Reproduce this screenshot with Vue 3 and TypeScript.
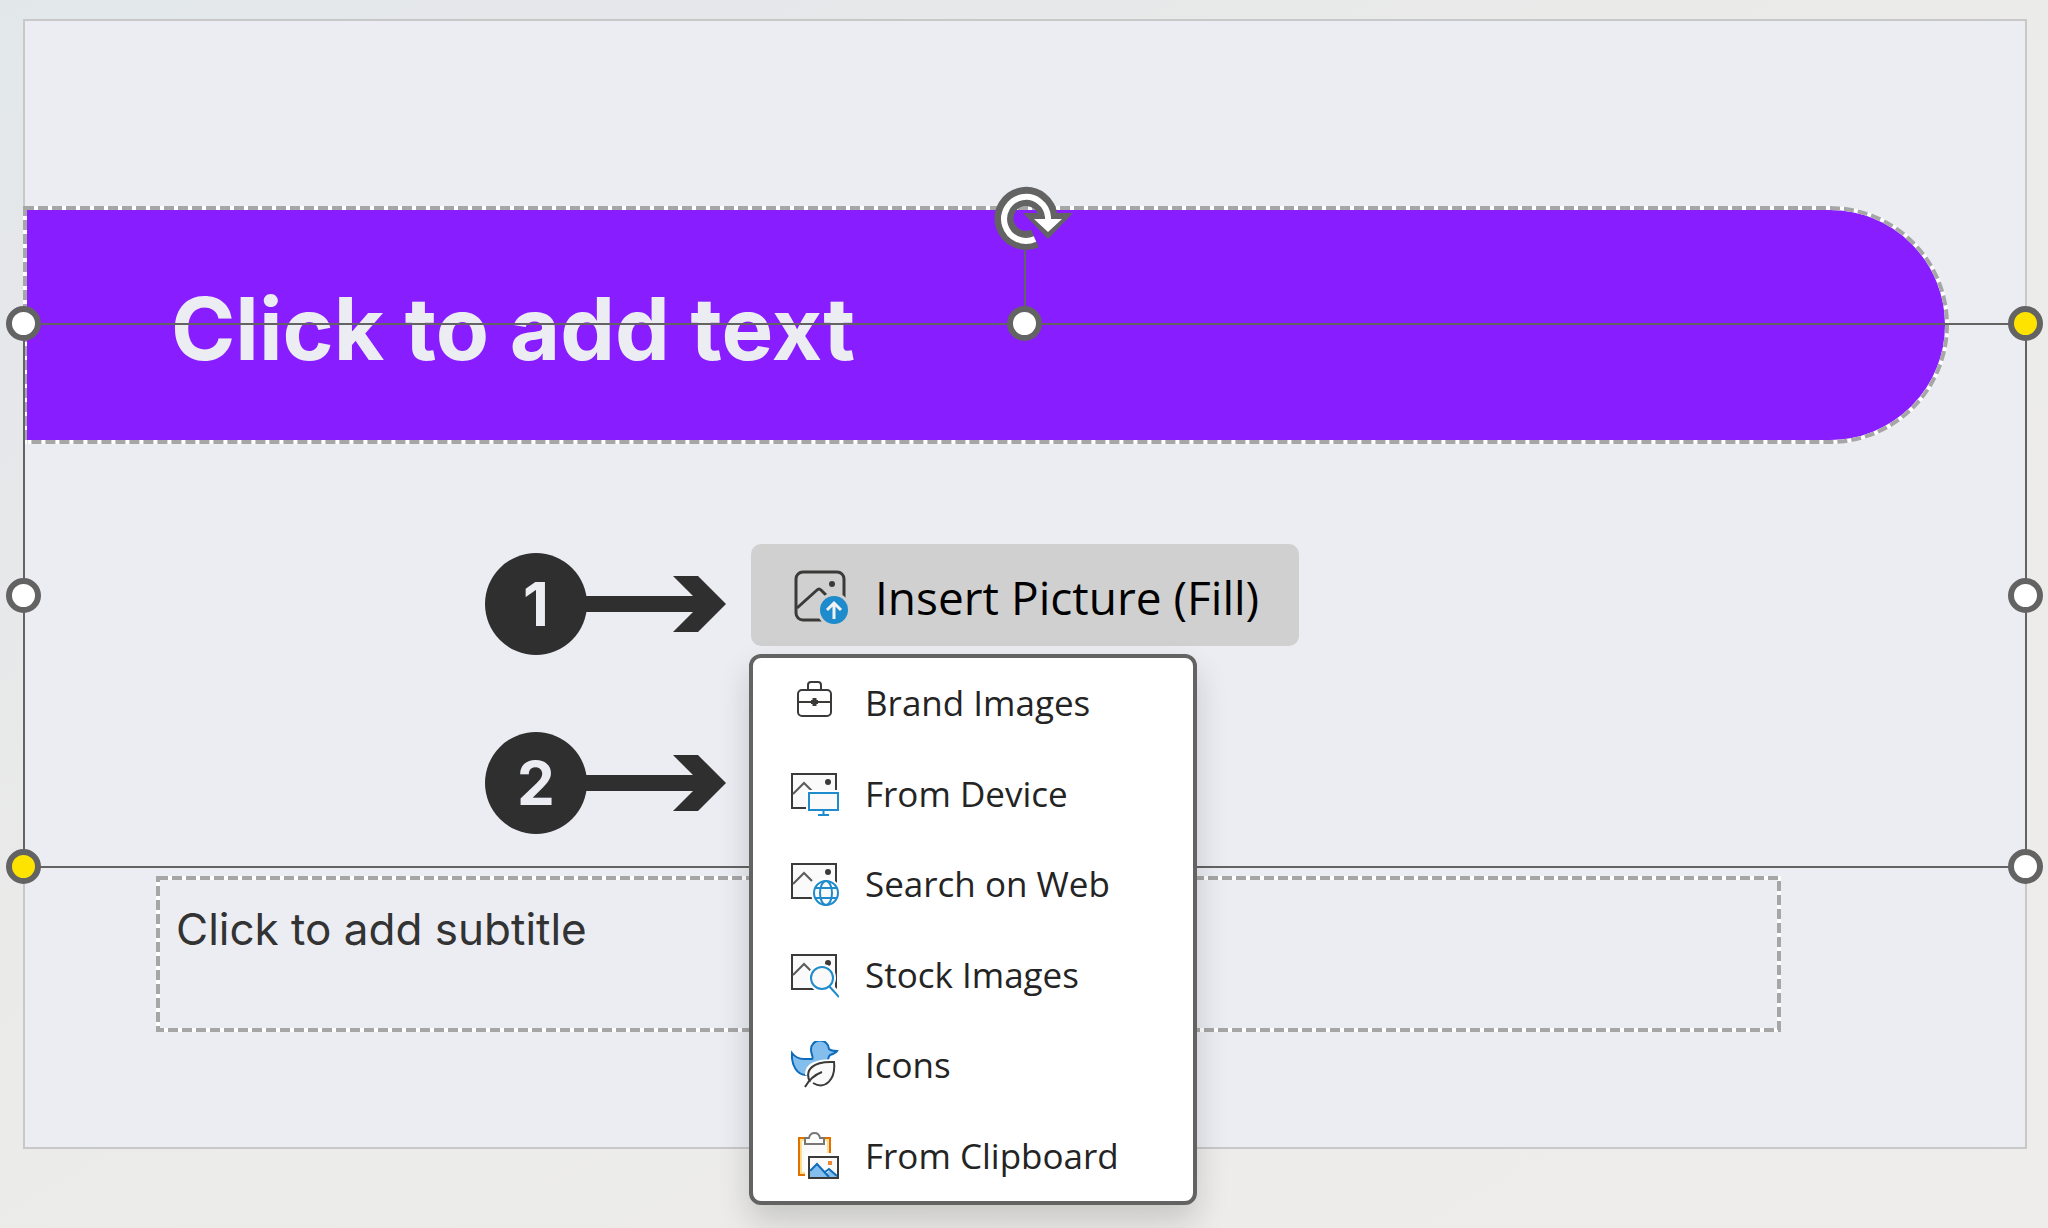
<script setup lang="ts">
import { ref } from 'vue'

interface Handle {
  id: string
  label: string
  adjust?: boolean
}

interface MenuEntry {
  id: string
  label: string
}

const title = ref('Click to add text')
const subtitle = ref('Click to add subtitle')

const steps: number[] = [1, 2]

const handles: Handle[] = [
  { id: 'nw', label: 'Resize top left' },
  { id: 'n', label: 'Resize top' },
  { id: 'ne', label: 'Adjust top right corner', adjust: true },
  { id: 'w', label: 'Resize left' },
  { id: 'e', label: 'Resize right' },
  { id: 'sw', label: 'Adjust bottom left corner', adjust: true },
  { id: 'se', label: 'Resize bottom right' },
]

const entries: MenuEntry[] = [
  { id: 'brand', label: 'Brand Images' },
  { id: 'device', label: 'From Device' },
  { id: 'web', label: 'Search on Web' },
  { id: 'stock', label: 'Stock Images' },
  { id: 'icons', label: 'Icons' },
  { id: 'clipboard', label: 'From Clipboard' },
]
</script>

<template>
  <main class="workspace">
    <section class="slide" aria-label="Slide">
      <div class="band">
        <svg class="outline" aria-hidden="true">
          <rect class="band-shape fill" x="-200" y="2" height="234" rx="117" />
          <rect class="band-shape base" x="-200" y="2" height="234" rx="117" />
          <rect class="band-shape dash" x="-200" y="2" height="234" rx="117" />
          <path class="base" d="M2 0V238" />
          <path class="dash" d="M2 0V238" />
        </svg>
        <input v-model="title" class="title" type="text" aria-label="Slide title" />
      </div>

      <div class="subtitle-box">
        <svg class="outline" aria-hidden="true">
          <rect class="box-shape base" x="2" y="2" />
          <rect class="box-shape dash" x="2" y="2" />
        </svg>
        <input v-model="subtitle" class="subtitle" type="text" aria-label="Slide subtitle" />
      </div>

      <div class="selection">
        <span class="stem"></span>
        <button class="rotate" type="button" aria-label="Rotate">
          <svg viewBox="0 0 84 66" aria-hidden="true">
            <path d="M43 53.5A22 22 0 1 1 56 32" fill="none" stroke="#636363" stroke-width="19" />
            <path d="M31 28H81L56 54Z" fill="#636363" />
            <path d="M43 54A22 22 0 1 1 56 32V38" fill="none" stroke="#fff" stroke-width="6" />
            <path d="M42 34H70L56 47Z" fill="#fff" />
          </svg>
        </button>
        <button
          v-for="h in handles"
          :key="h.id"
          type="button"
          class="handle"
          :class="[h.id, { adjust: h.adjust }]"
          :aria-label="h.label"
        ></button>
      </div>

      <div class="tools">
        <ol class="steps">
          <li v-for="n in steps" :key="n" class="step">
            <span class="number">{{ n }}</span>
            <svg class="arrow" viewBox="0 0 142 56" aria-hidden="true">
              <path d="M0 20H109L89 0H114L142 28L114 56H89L109 36H0Z" fill="#2f2f2f" />
            </svg>
          </li>
        </ol>

        <div class="picker">
          <button class="insert" type="button" aria-haspopup="menu" aria-expanded="true">
            <svg class="insert-icon" viewBox="0 0 56 56" aria-hidden="true">
              <rect x="3" y="3" width="48" height="48" rx="7" fill="none" stroke="#3b3a39" stroke-width="3" />
              <path d="M4 39L24 21Q26 19 28 21L33 26" fill="none" stroke="#3b3a39" stroke-width="3" />
              <circle cx="39" cy="15" r="3" fill="#3b3a39" />
              <circle cx="41" cy="41" r="17" fill="#d0d0d0" />
              <circle cx="41" cy="41" r="14" fill="#1e8bcd" />
              <path d="M41 50V34M34 41L41 34L48 41" fill="none" stroke="#f3f3f3" stroke-width="3" />
            </svg>
            Insert Picture (Fill)
          </button>

          <div class="menu" role="menu" aria-label="Insert Picture">
            <button v-for="e in entries" :key="e.id" class="entry" type="button" role="menuitem">
              <svg class="entry-icon" viewBox="0 0 48 48" fill="none" aria-hidden="true">
                <g v-if="e.id === 'brand'" stroke="#3b3a39" stroke-width="2">
                  <rect x="7" y="11" width="33" height="26" rx="4" />
                  <path d="M17 11V6Q17 3 20 3H27Q30 3 30 6V11M7 23H40" />
                  <path d="M23.500 19V27" stroke-width="4" />
                  <path d="M20 23H27" stroke-width="4" />
                </g>

                <g v-if="e.id === 'device' || e.id === 'web' || e.id === 'stock'">
                  <rect x="1" y="4" width="44" height="34" fill="#fafafa" stroke="#3b3a39" stroke-width="2" />
                  <path d="M2 24L13 13L21 21" stroke="#5a5a5a" stroke-width="2" />
                  <circle cx="37" cy="12" r="3" fill="#3b3a39" />
                </g>
                <g v-if="e.id === 'device'">
                  <path d="M15 20H48V42H15Z" fill="#fff" />
                  <path d="M18 23H47V40H18ZM32.500 40V45M27 45H38" fill="#fafafa" stroke="#1e8bcd" stroke-width="2" />
                </g>
                <g v-if="e.id === 'web'">
                  <circle cx="35" cy="33" r="15" fill="#fff" />
                  <g stroke="#1e8bcd" stroke-width="2">
                    <circle cx="35" cy="33" r="12" fill="#fafafa" />
                    <ellipse cx="35" cy="33" rx="6" ry="12" />
                    <path d="M24 28H46M24 38H46" />
                  </g>
                </g>
                <g v-if="e.id === 'stock'">
                  <circle cx="31" cy="27" r="14" fill="#fff" />
                  <path d="M37 34L48 45" stroke="#fff" stroke-width="7" />
                  <circle cx="31" cy="27" r="11" fill="#fafafa" stroke="#1e8bcd" stroke-width="2" />
                  <path d="M38 35L48 46" stroke="#1e8bcd" stroke-width="2" />
                </g>

                <g v-if="e.id === 'icons'" stroke-width="2">
                  <path
                    d="M1 12C4 16 8 18 13 18H21C23 17 20 13 20 9A9 9 0 0 1 38 8C40 10 42 10 46 10C45 12 42 13 39 14C37 16 37 19 36 22C34 30 25 34 15 34C6 34 0 24 1 12Z"
                    fill="#83beec"
                    stroke="#0f6cbd"
                  />
                  <path d="M14 34C14 22 24 18 45 18V36H20Z" fill="#fff" />
                  <path
                    d="M19 41C13 29 22 20 43 21C45 39 34 49 22 42M14 46C18 39 23 34 31 31"
                    fill="#fafafa"
                    stroke="#3b3a39"
                  />
                </g>

                <g v-if="e.id === 'clipboard'">
                  <rect x="8" y="6" width="31" height="37" fill="#fafafa" stroke="#e07000" stroke-width="2" />
                  <rect x="10" y="8" width="27" height="33" stroke="#ffdd8f" stroke-width="2" />
                  <path d="M14 12V6H18Q19 1 23.500 1Q28 1 29 6H33V12Z" fill="#fff" stroke="#797774" stroke-width="2" />
                  <path d="M14 21H48V47H14Z" fill="#fff" />
                  <rect x="18" y="25" width="29" height="21" fill="#fafafa" stroke="#3b3a39" stroke-width="2" />
                  <path d="M19 40L26 33L35 42L39 38L46 44V45H19Z" fill="#83beec" />
                  <path d="M19 39L26 32L38 45M34 40L38 37L46 44" stroke="#0f6cbd" stroke-width="2" />
                  <path d="M37 29H41V33H37Z" fill="#ed8733" />
                </g>
              </svg>
              {{ e.label }}
            </button>
          </div>
        </div>
      </div>
    </section>
  </main>
</template>

<style>
body {
  margin: 0;
}
</style>

<style scoped>
.workspace {
  box-sizing: border-box;
  display: flex;
  min-height: 100vh;
  padding: 19px 21px 79px 23px;
  overflow: hidden;
  background: linear-gradient(150deg, #e2e8ea, #e6e7ea 16%, #ebebe9 45%, #eeedeb);
}

.slide {
  position: relative;
  box-sizing: border-box;
  flex: 1;
  border: 2px solid #c8c8c8;
  background: #ecedf3;
}

button,
input {
  margin: 0;
  padding: 0;
  border: 0;
  background: none;
  font: inherit;
  color: inherit;
}

.outline {
  position: absolute;
  inset: 0;
  width: 100%;
  height: 100%;
  fill: none;
}

.fill {
  fill: #881eff;
}

.base {
  stroke: #fff;
  stroke-width: 4px;
}

.dash {
  stroke: #a6a6a6;
  stroke-width: 4px;
  stroke-dasharray: 10 4;
}

.band-shape {
  width: calc(100% + 198px);
}

.box-shape {
  width: calc(100% - 4px);
  height: calc(100% - 4px);
}

.band {
  position: absolute;
  top: 185px;
  left: -2px;
  right: 76px;
  box-sizing: border-box;
  display: flex;
  align-items: center;
  height: 238px;
  padding-top: 8px;
}

.title {
  position: relative;
  width: 70%;
  margin-left: 148px;
  font: 700 87px/100px Inter, sans-serif;
  color: #ecedf3;
}

.subtitle-box {
  position: absolute;
  top: 855px;
  left: 131px;
  right: 244px;
  box-sizing: border-box;
  height: 156px;
  padding: 27px 20px;
}

.subtitle {
  position: relative;
  width: 100%;
  font: 400 44px/52px Inter, sans-serif;
  color: #333;
}

.selection {
  position: absolute;
  top: 303px;
  left: -1px;
  right: -1px;
  height: 543px;
}

.selection::before {
  content: "";
  position: absolute;
  inset: -1px;
  border: 2px solid #636363;
}

.stem {
  position: absolute;
  left: calc(50% - 1px);
  bottom: 100%;
  width: 2px;
  height: 74px;
  background: #636363;
}

.rotate {
  position: absolute;
  top: -139px;
  left: calc(50% - 33px);
  width: 84px;
  height: 66px;
}

.rotate svg {
  display: block;
}

.handle {
  position: absolute;
  top: 0;
  left: 0;
  box-sizing: border-box;
  width: 35px;
  height: 35px;
  margin: -18px;
  border: 6px solid #636363;
  border-radius: 50%;
  background: #fff;
}

.adjust {
  background: #ffe300;
}

.n {
  left: 50%;
}

.w,
.e {
  top: 50%;
}

.ne,
.e,
.se {
  left: 100%;
}

.sw,
.se {
  top: 100%;
}

.tools {
  position: absolute;
  top: 523px;
  left: calc(50% - 540px);
  display: flex;
}

.steps {
  display: grid;
  align-content: start;
  gap: 77px;
  width: 264px;
  margin: 0;
  padding: 9px 0 0;
  list-style: none;
}

.step {
  display: flex;
  align-items: center;
}

.number {
  width: 102px;
  border-radius: 50%;
  background: #2f2f2f;
  font: 700 60px/102px Inter, sans-serif;
  text-align: center;
  color: #ecedf3;
}

.arrow {
  width: 142px;
  height: 56px;
  margin-left: -3px;
}

.picker {
  font-family: "Open Sans", "Noto Sans", sans-serif;
}

.insert {
  box-sizing: border-box;
  display: flex;
  align-items: center;
  gap: 26px;
  height: 102px;
  margin-left: 2px;
  padding: 4px 40px 0 42px;
  border-radius: 10px;
  background: #d0d0d0;
  font-size: 46px;
  line-height: 64px;
  white-space: nowrap;
  color: #000;
}

.insert-icon {
  width: 56px;
  height: 56px;
}

.menu {
  box-sizing: border-box;
  display: grid;
  grid-auto-rows: 1fr;
  width: 448px;
  height: 551px;
  margin-top: 8px;
  border: 4px solid #636363;
  border-radius: 12px;
  background: #fff;
  box-shadow: 0 16px 32px rgba(0, 0, 0, 0.16);
}

.entry {
  display: flex;
  align-items: center;
  gap: 26px;
  padding-left: 38px;
  font-size: 35px;
  line-height: 50px;
  text-align: left;
  white-space: nowrap;
  color: #242424;
}

.entry-icon {
  width: 48px;
  height: 48px;
}
</style>
